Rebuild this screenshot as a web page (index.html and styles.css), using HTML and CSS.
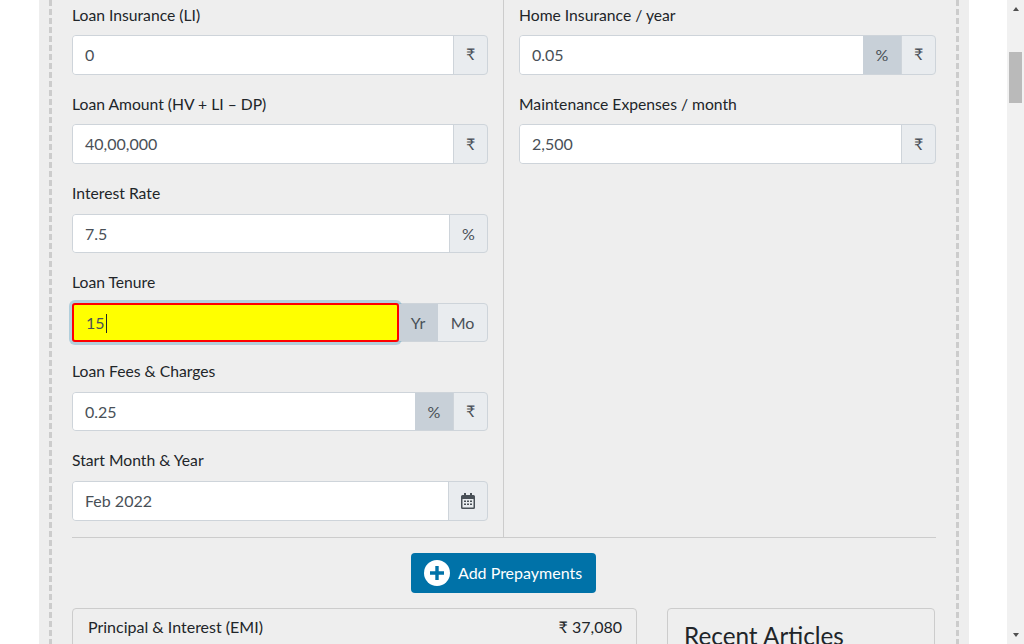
FILE: index.html
```html
<!DOCTYPE html>
<html lang="en">
<head>
    <meta charset="UTF-8">
    <meta name="viewport" content="width=device-width, initial-scale=1.0">
    <title>Loan Calculator</title>
    <link rel="stylesheet" href="styles.css">
</head>
<body>
    <div class="page">
        <div class="panel">
            <div class="dashed">
                <div class="columns">
                    <div class="col col-left">
                        <div class="field">
                            <label>Loan Insurance (LI)</label>
                            <div class="group">
                                <div class="value">0</div>
                                <span class="addon rupee">₹</span>
                            </div>
                        </div>
                        <div class="field">
                            <label>Loan Amount (HV + LI – DP)</label>
                            <div class="group">
                                <div class="value">40,00,000</div>
                                <span class="addon rupee">₹</span>
                            </div>
                        </div>
                        <div class="field">
                            <label>Interest Rate</label>
                            <div class="group">
                                <div class="value">7.5</div>
                                <span class="addon percent">%</span>
                            </div>
                        </div>
                        <div class="field">
                            <label>Loan Tenure</label>
                            <div class="group">
                                <div class="value focused">15<i class="caret"></i></div>
                                <span class="addon active unit-yr">Yr</span>
                                <span class="addon unit-mo">Mo</span>
                            </div>
                        </div>
                        <div class="field">
                            <label>Loan Fees &amp; Charges</label>
                            <div class="group">
                                <div class="value">0.25</div>
                                <span class="addon active percent">%</span>
                                <span class="addon rupee">₹</span>
                            </div>
                        </div>
                        <div class="field">
                            <label>Start Month &amp; Year</label>
                            <div class="group">
                                <div class="value">Feb 2022</div>
                                <span class="addon date">
                                    <svg viewBox="0 0 14 16" width="14" height="16">
                                        <path fill="#495057" d="M3 0h2v2h4V0h2v2h1.500A1.500 1.500 0 0 1 14 3.500v11a1.500 1.500 0 0 1-1.500 1.500h-11A1.500 1.500 0 0 1 0 14.500v-11A1.500 1.500 0 0 1 1.500 2H3zM1.500 6v8.500h11V6z"/>
                                        <path fill="#495057" d="M3 7.500h2v1.500H3zM6 7.500h2v1.500H6zM9 7.500h2v1.500H9zM3 10.500h2V12H3zM6 10.500h2V12H6zM9 10.500h2V12H9z"/>
                                    </svg>
                                </span>
                            </div>
                        </div>
                    </div>
                    <div class="col col-right">
                        <div class="field">
                            <label>Home Insurance / year</label>
                            <div class="group">
                                <div class="value">0.05</div>
                                <span class="addon active percent">%</span>
                                <span class="addon rupee">₹</span>
                            </div>
                        </div>
                        <div class="field">
                            <label>Maintenance Expenses / month</label>
                            <div class="group">
                                <div class="value">2,500</div>
                                <span class="addon rupee">₹</span>
                            </div>
                        </div>
                    </div>
                </div>
                <div class="actions">
                    <button class="add-btn">
                        <svg viewBox="0 0 26 26" width="26" height="26">
                            <circle cx="13" cy="13" r="13" fill="#fff"/>
                            <path fill="#0072a8" d="M11.300 6h3.400v5.300H20v3.400h-5.300V20h-3.400v-5.300H6v-3.400h5.300z"/>
                        </svg>
                        Add Prepayments
                    </button>
                </div>
                <div class="bottom">
                    <div class="card card-summary">
                        <span>Principal &amp; Interest (EMI)</span>
                        <span>₹ 37,080</span>
                    </div>
                    <div class="card card-articles">
                        <h3>Recent Articles</h3>
                    </div>
                </div>
            </div>
        </div>
    </div>
    <div class="scrollbar">
        <span class="arrow-up"></span>
        <div class="thumb"></div>
        <span class="arrow-down"></span>
    </div>
</body>
</html>
```

FILE: styles.css
```css
html, body {
    height: 100%;
}
body {
    margin: 0;
    height: 644px;
    overflow: hidden;
    display: flex;
    background-color: #fff;
    font-family: Lato, "Noto Sans", sans-serif;
    font-size: 16px;
    color: #212529;
}
.page {
    width: 1007px;
    height: 644px;
    overflow: hidden;
    padding: 0 38px 0 39px;
    box-sizing: border-box;
}
.panel {
    background-color: #eee;
    padding: 0 10px;
}
.dashed {
    border-left: 3px dashed #ccc;
    border-right: 3px dashed #ccc;
    padding: 0 20px;
}
.columns {
    display: flex;
    border-bottom: 1px solid #ccc;
}
.col {
    box-sizing: border-box;
    padding-bottom: 16.4px;
}
.col-left {
    width: 432px;
    padding-right: 15px;
    border-right: 1px solid #ccc;
}
.col-right {
    flex: 1;
    padding-left: 15px;
}
.field {
    height: 89.2px;
    box-sizing: border-box;
    padding-top: 2.6px;
}
.field:last-child {
    height: auto;
}
label {
    display: block;
    line-height: 24px;
    margin-bottom: 8.6px;
    font-size: 15.7px;
}
.col-left .field:last-child {
    padding-top: 2px;
}
.col-left .field:last-child label {
    margin-bottom: 9.2px;
}
.group {
    display: flex;
    height: 39.4px;
    border: 1px solid #ced4da;
    border-radius: 4px;
    box-sizing: border-box;
    background-color: #e9ecef;
}
.value {
    flex: 1;
    background-color: #fff;
    padding-left: 12px;
    line-height: 38.8px;
    color: #495057;
    border-radius: 3px 0 0 3px;
}
.focused {
    margin: -1px 0 -1px -1px;
    background-color: #ff0;
    border: 2px solid #f00;
    border-radius: 3px;
    line-height: 36.8px;
    box-shadow: 0 0 0 3px rgba(0, 114, 168, 0.25);
}
.caret {
    display: inline-block;
    width: 1px;
    height: 19px;
    margin-left: 1px;
    vertical-align: -4px;
    background-color: #212529;
}
.addon {
    box-sizing: border-box;
    display: flex;
    align-items: center;
    justify-content: center;
    border-left: 1px solid #ced4da;
    color: #495057;
}
.rupee {
    width: 34px;
    padding-bottom: 2px;
}
.percent {
    width: 38px;
}
.date {
    width: 39px;
}
.unit-yr {
    width: 39px;
    padding-right: 1px;
}
.unit-mo {
    width: 49px;
    border-left: 0;
}
.active {
    background-color: #c8d0d8;
    border-left: 0;
}
.actions {
    display: flex;
    justify-content: center;
    padding: 15px 0;
}
.add-btn {
    display: flex;
    align-items: center;
    gap: 8px;
    width: 185px;
    height: 40px;
    margin-right: 1px;
    padding: 0 0 0 13px;
    background-color: #0072a8;
    color: white;
    border: none;
    border-radius: 4px;
    font-family: inherit;
    font-size: 16px;
    cursor: pointer;
}
.bottom {
    display: flex;
    justify-content: space-between;
    align-items: flex-start;
}
.card {
    border: 1px solid #ccc;
    border-radius: 4px;
    box-sizing: border-box;
    height: 100px;
}
.card-summary {
    width: 565px;
    display: flex;
    justify-content: space-between;
    padding: 8px 14px 8px 15px;
}
.card-articles {
    width: 268px;
    padding: 12px 16px;
    margin-right: 1px;
}
.card-articles h3 {
    margin: 0;
    font-size: 24.3px;
    font-weight: 400;
}
.scrollbar {
    width: 17px;
    height: 644px;
    flex: none;
    background-color: #f1f1f1;
    display: flex;
    flex-direction: column;
    align-items: center;
}
.arrow-up {
    margin-top: 7px;
    border: 3.5px solid transparent;
    border-top: 0;
    border-bottom-width: 4px;
    border-bottom-color: #505050;
}
.thumb {
    width: 13px;
    height: 51px;
    margin-top: 41px;
    background-color: #bababa;
}
.arrow-down {
    margin-top: auto;
    margin-bottom: 7px;
    border: 3.5px solid transparent;
    border-bottom: 0;
    border-top-width: 4px;
    border-top-color: #505050;
}
```
